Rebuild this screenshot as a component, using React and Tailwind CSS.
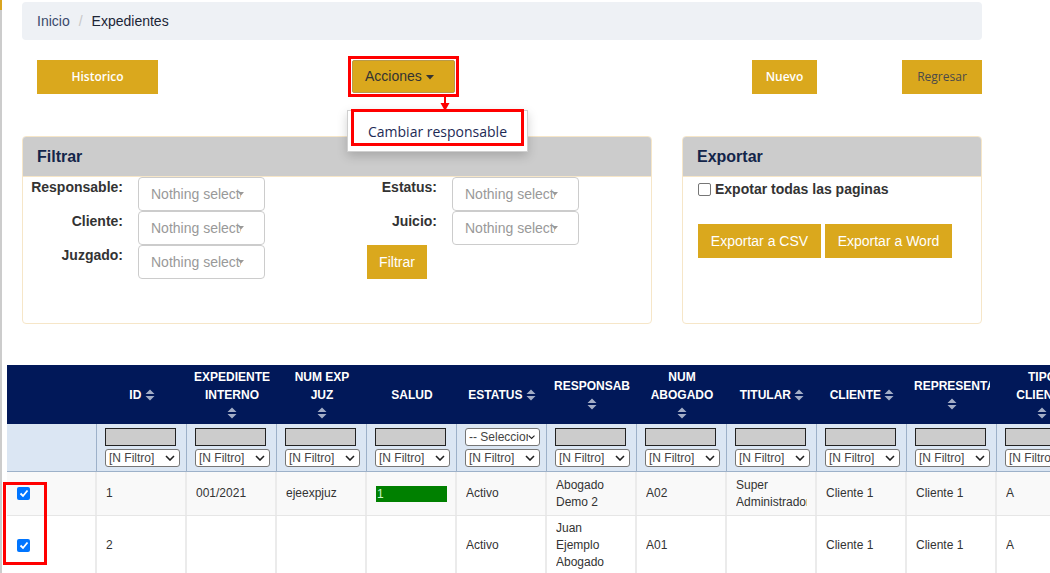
import React from "react";

const Sort = () => (
  <svg width="10" height="12" viewBox="0 0 10 12" className="inline-block align-[-2px]">
    <path d="M5 0.5L9.5 5H0.5Z M0.5 7H9.5L5 11.5Z" fill="#a3adc6" />
  </svg>
);

const Caret = ({ color = "#333" }) => (
  <svg width="8" height="5" viewBox="0 0 8 5" className="inline-block">
    <path d="M0 0H8L4 4.5Z" fill={color} />
  </svg>
);

const Chevron = () => (
  <svg width="10" height="6" viewBox="0 0 10 6">
    <path d="M1 1L5 5L9 1" stroke="#222" strokeWidth="1.6" fill="none" />
  </svg>
);

const NSelect = ({ text = "[N Filtro]" }) => (
  <div className="w-[75px] h-[18px] bg-white border border-[#767676] rounded-[3px] flex items-center justify-between pl-[3px] pr-[4px] text-[12px] leading-[16px] text-[#444] overflow-hidden whitespace-nowrap">
    <span className="overflow-hidden">{text}</span>
    <Chevron />
  </div>
);

const GreyInput = () => (
  <div className="w-[71px] h-[18px] bg-[#cccccc] border border-[#222]" />
);

const Check = () => (
  <div className="w-[13px] h-[13px] rounded-[2px] bg-[#0075ff] flex items-center justify-center">
    <svg width="10" height="9" viewBox="0 0 10 9">
      <path d="M1.5 4.5L4 7L8.5 1.5" stroke="white" strokeWidth="1.8" fill="none" />
    </svg>
  </div>
);

const PickerBox = () => (
  <div className="relative w-[127px] h-[34px] border border-[#cccccc] rounded-[4px] bg-white">
    <div className="absolute left-[12px] top-0 h-[32px] w-[90px] overflow-hidden whitespace-nowrap text-[14px] leading-[32px] text-[#999]">
      Nothing selected
    </div>
    <div className="absolute left-[99px] top-[14px]">
      <svg width="6" height="4" viewBox="0 0 6 4">
        <path d="M0 0H6L3 3.5Z" fill="#999" />
      </svg>
    </div>
  </div>
);

const headers = [
  null,
  <>ID <Sort /></>,
  <>EXPEDIENTE<br />INTERNO<br /><Sort /></>,
  <>NUM EXP<br />JUZ<br /><Sort /></>,
  <>SALUD</>,
  <>ESTATUS <Sort /></>,
  <>RESPONSABLE<br /><Sort /></>,
  <>NUM<br />ABOGADO<br /><Sort /></>,
  <>TITULAR <Sort /></>,
  <>CLIENTE <Sort /></>,
  <>REPRESENTANTE<br /><Sort /></>,
  <>TIPO<br />CLIENTE<br /><Sort /></>,
];

const Salud = () => (
  <div className="w-[72px] h-[16px] bg-[#008000] text-[#ccf5cc] text-[12px] leading-[16px] pl-[1px]">1</div>
);

const rows = [
  {
    h: "h-[44px]",
    bg: "bg-[#f9f9f9]",
    cells: [
      <Check />,
      "1",
      "001/2021",
      "ejeexpjuz",
      <Salud />,
      "Activo",
      <>Abogado<br />Demo 2</>,
      "A02",
      <>Super<br />Administrador</>,
      "Cliente 1",
      "Cliente 1",
      "A",
    ],
  },
  {
    h: "h-[60px]",
    bg: "bg-white",
    cells: [
      <Check />,
      "2",
      "",
      "",
      "",
      "Activo",
      <>Juan<br />Ejemplo<br />Abogado</>,
      "A01",
      "",
      "Cliente 1",
      "Cliente 1",
      "A",
    ],
  },
];

export default function App() {
  return (
    <div className="relative w-[1050px] h-[573px] overflow-hidden bg-white font-['Liberation_Sans',Arial,sans-serif] text-[#333]">
      {/* left edge bar */}
      <div className="absolute left-0 top-0 w-[2px] h-full bg-[#cccccc]">
        <div className="w-[2px] h-[10px] bg-[#daa520]" />
      </div>

      {/* breadcrumb */}
      <div className="ml-[22px] mt-[2px] w-[960px] h-[38px] bg-[#eef1f5] rounded-[4px] flex items-center pl-[15px] text-[14px]">
        <span className="text-[#3a4a6b]">Inicio</span>
        <span className="text-[#c8c8c8] px-[9px]">/</span>
        <span className="text-[#1c2536]">Expedientes</span>
      </div>

      {/* buttons row */}
      <div className="flex mt-[20px] h-[34px] items-start">
        <div className="ml-[37px] w-[121px] h-[34px] bg-[#daa81d] text-white text-[12px] font-semibold font-['Open_Sans',sans-serif] flex items-center justify-center">
          Historico
        </div>
        <div className="relative ml-[194px] w-[103px] h-[33px]">
          <div className="absolute -left-[4px] -top-[4px] w-[111px] h-[41px] border-[3px] border-[#ff0000]" />
          <div className="w-[103px] h-[33px] bg-[#daa81d] border border-[#b89a4a] rounded-[2px] flex items-center pl-[12px] text-[14px] text-[#333]">
            Acciones
            <span className="ml-[4px] mt-[1px]"><Caret /></span>
          </div>
          {/* arrow */}
          <svg className="absolute left-[87px] top-[36px]" width="12" height="16" viewBox="0 0 12 16">
            <path d="M5 0H7V8H5Z" fill="#ff0000" />
            <path d="M1.5 7H10.5L6 15Z" fill="#ff0000" />
          </svg>
          {/* dropdown menu */}
          <div className="absolute -left-[5px] top-[50px] w-[181px] h-[42px] bg-white border border-[#cfcfcf] shadow-[0_4px_10px_rgba(0,0,0,0.18)]">
            <div className="absolute left-[3px] -top-[2px] w-[173px] h-[37px] border-[3px] border-[#ff0000] flex items-center justify-center font-['Open_Sans',sans-serif] text-[14px] text-[#1d2a55] whitespace-nowrap pt-[8px]">
              Cambiar responsable
            </div>
          </div>
        </div>
        <div className="ml-[297px] w-[65px] h-[34px] bg-[#daa81d] text-white text-[12px] font-semibold font-['Open_Sans',sans-serif] flex items-center justify-center">
          Nuevo
        </div>
        <div className="ml-[85px] w-[80px] h-[34px] bg-[#daa81d] text-[#4a4a4a] text-[12px] font-['Open_Sans',sans-serif] flex items-center justify-center">
          Regresar
        </div>
      </div>

      {/* panels */}
      <div className="flex mt-[42px]">
        <div className="ml-[22px] w-[630px] h-[188px] border border-[#f6e6c8] rounded-[4px] overflow-hidden">
          <div className="h-[40px] bg-[#cccccc] border-b border-[#f6e6c8] flex items-center pl-[14px] text-[16px] font-bold text-[#13254a]">
            Filtrar
          </div>
          <div className="flex">
            <div className="flex flex-col">
              {["Responsable:", "Cliente:", "Juzgado:"].map((l) => (
                <div key={l} className="flex h-[34px]">
                  <div className="w-[100px] text-right text-[14px] leading-[20px] font-bold text-[#333]">{l}</div>
                  <div className="ml-[15px]"><PickerBox /></div>
                </div>
              ))}
            </div>
            <div className="flex flex-col ml-[72px]">
              {["Estatus:", "Juicio:"].map((l) => (
                <div key={l} className="flex h-[34px]">
                  <div className="w-[100px] text-right text-[14px] leading-[20px] font-bold text-[#333]">{l}</div>
                  <div className="ml-[15px]"><PickerBox /></div>
                </div>
              ))}
              <div className="ml-[30px] w-[60px] h-[34px] bg-[#daa81d] text-white text-[14px] flex items-center justify-center">
                Filtrar
              </div>
            </div>
          </div>
        </div>

        <div className="ml-[30px] w-[300px] h-[188px] border border-[#f6e6c8] rounded-[4px] overflow-hidden">
          <div className="h-[40px] bg-[#cccccc] border-b border-[#f6e6c8] flex items-center pl-[14px] text-[16px] font-bold text-[#13254a]">
            Exportar
          </div>
          <div className="pl-[15px] pt-[2px]">
            <div className="flex items-center h-[20px]">
              <div className="w-[13px] h-[13px] border border-[#767676] rounded-[2px] bg-white" />
              <span className="ml-[4px] text-[14px] font-bold text-[#333]">Expotar todas las paginas</span>
            </div>
            <div className="flex mt-[25px] gap-[4px]">
              <div className="w-[123px] h-[34px] bg-[#daa81d] text-white text-[14px] flex items-center justify-center">
                Exportar a CSV
              </div>
              <div className="w-[127px] h-[34px] bg-[#daa81d] text-white text-[14px] flex items-center justify-center">
                Exportar a Word
              </div>
            </div>
          </div>
        </div>
      </div>

      {/* table */}
      <div className="relative ml-[7px] mt-[41px] w-[1100px]">
        <div className="flex h-[59px] bg-[#011859]">
          {headers.map((h, i) => (
            <div key={i} className="w-[90px] shrink-0 h-[59px] px-[7px] flex items-center">
              <div className="w-full overflow-hidden text-center whitespace-nowrap text-white font-bold text-[12px] leading-[18px]">
                {h}
              </div>
            </div>
          ))}
        </div>
        <div className="flex h-[48px] bg-[#dbe6f3] border-b border-[#9db1c9]">
          {headers.map((h, i) => (
            <div key={i} className="w-[90px] shrink-0 border-r border-[#9db1c9] pl-[8px] pt-[4px]">
              {i === 0 ? null : (
                <>
                  {i === 5 ? <NSelect text="-- Seleccione --" /> : <GreyInput />}
                  <div className="mt-[3px]"><NSelect /></div>
                </>
              )}
            </div>
          ))}
        </div>
        {rows.map((r, ri) => (
          <div key={ri} className={`flex ${r.h} ${r.bg} border-b border-[#e6e6e6]`}>
            {r.cells.map((c, i) => (
              <div key={i} className="w-[90px] shrink-0 border-r-2 border-[#ebebeb] pl-[9px] pr-[8px] flex items-center">
                <div className={`w-full overflow-hidden whitespace-nowrap text-[12px] leading-[17px] text-[#333] ${i === 0 ? "pl-[1px]" : ""}`}>
                  {c}
                </div>
              </div>
            ))}
          </div>
        ))}
        {/* annotation box */}
        <div className="absolute -left-[4px] top-[117px] w-[44px] h-[83px] border-[3px] border-[#ff0000]" />
      </div>
    </div>
  );
}
